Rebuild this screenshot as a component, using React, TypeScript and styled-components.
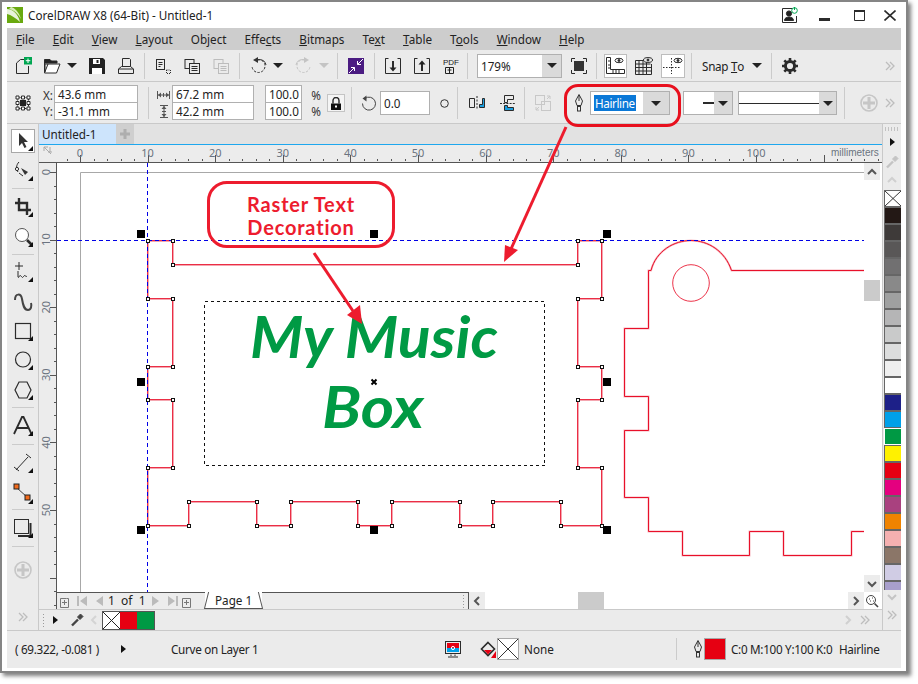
import React from "react";
import styled, { createGlobalStyle } from "styled-components";

const FS = "11.7px";
const GlobalStyle = createGlobalStyle`
  html, body { margin: 0; padding: 0; background: #fff; }
  body { font-family: "Noto Sans", "Open Sans", sans-serif; font-size: ${FS}; color: #222; }
`;

const RED = "#ed1c2e";
const Page = styled.div`
  position: relative;
  width: 918px;
  height: 684px;
  overflow: hidden;
`;
const Frame = styled.div`
  width: 908px;
  height: 673px;
  box-sizing: border-box;
  border: 2px solid #858585;
  padding: 0 5px 3px;
  background: #fff;
  box-shadow: 3px 3px 4px rgba(0, 0, 0, 0.5);
  display: flex;
  flex-direction: column;
`;
const TitleBar = styled.div`
  height: 26px;
  display: flex;
  align-items: center;
  flex: none;
`;
const TitleText = styled.span`
  margin-left: 5px;
  flex: 1;
`;
const WinBtn = styled.div<{ $ml: number }>`
  margin-left: ${(p) => p.$ml}px;
  display: flex;
`;
const MenuBar = styled.div`
  height: 22px;
  flex: none;
  background: #cdcdcd;
  display: flex;
  align-items: center;
  padding-left: 9px;
  gap: 18.1px;
`;
const MenuItem = styled.span`
  color: #222;
`;
const Toolbar = styled.div<{ $h: number; $pt?: number }>`
  height: ${(p) => p.$h}px;
  flex: none;
  box-sizing: border-box;
  background: #ebebeb;
  border-bottom: 1px solid #c9c9c9;
  padding-top: ${(p) => p.$pt ?? 0}px;
  display: flex;
  align-items: center;
`;
const Tool = styled.div<{ $ml?: number; $w?: number }>`
  margin-left: ${(p) => p.$ml ?? 0}px;
  width: ${(p) => (p.$w ? `${p.$w}px` : "auto")};
  display: flex;
  align-items: center;
  justify-content: center;
  flex: none;
  white-space: nowrap;
`;
const Toggle = styled(Tool)`
  height: 24px;
  box-sizing: border-box;
  background: #fff;
  border: 1px solid #bdbdbd;
`;
const SnapLabel = styled(Tool)`
  letter-spacing: -0.3px;
`;
const Sep = styled.div<{ $ml: number; $h?: number }>`
  margin-left: ${(p) => p.$ml}px;
  width: 1px;
  height: ${(p) => p.$h ?? 26}px;
  background: #cbcbcb;
  flex: none;
`;
const Combo = styled.div<{ $ml: number; $w: number; $h?: number }>`
  margin-left: ${(p) => p.$ml}px;
  width: ${(p) => p.$w}px;
  height: ${(p) => p.$h ?? 24}px;
  box-sizing: border-box;
  flex: none;
  display: flex;
  background: #fff;
  border: 1px solid #b0b0b0;
`;
const ComboValue = styled.div<{ $justify?: string; $flush?: boolean }>`
  flex: 1;
  min-width: 0;
  display: flex;
  align-items: center;
  justify-content: ${(p) => p.$justify ?? "flex-start"};
  padding-left: ${(p) => (p.$flush ? 0 : 3)}px;
`;
const ComboBtn = styled.div<{ $w: number }>`
  width: ${(p) => p.$w}px;
  background: #dadada;
  display: flex;
  align-items: center;
  justify-content: center;
`;
const Caret = styled.i<{ $dim?: boolean }>`
  display: block;
  width: 0;
  height: 0;
  border-left: 5px solid transparent;
  border-right: 5px solid transparent;
  border-top: 5px solid ${(p) => (p.$dim ? "#c4c4c4" : "#222")};
`;
const RightCaret = styled.i`
  display: block;
  width: 0;
  height: 0;
  border-top: 4px solid transparent;
  border-bottom: 4px solid transparent;
  border-left: 5px solid #111;
`;
const Selected = styled.span`
  background: #0a78d7;
  color: #fff;
  padding: 0 1px;
  letter-spacing: -0.4px;
`;
const Stack = styled.div<{ $ml: number; $w: number }>`
  margin-left: ${(p) => p.$ml}px;
  width: ${(p) => p.$w}px;
  flex: none;
  display: flex;
  flex-direction: column;
`;
const StackInput = styled.div`
  height: 16px;
  border: 1px solid #b0b0b0;
  margin-top: -1px;
  background: #fff;
  padding-left: 3px;
  line-height: 16px;
`;
const StackLabel = styled.div`
  height: 16px;
  line-height: 16px;
  text-align: center;
  color: #333;
`;
const DimSlot = styled(Tool)`
  height: 16px;
`;
const LockBtn = styled(Tool)`
  height: 18px;
  box-sizing: border-box;
  border: 1px solid #c4c4c4;
  background: #f4f4f4;
`;
const Workspace = styled.div`
  flex: 1;
  min-height: 0;
  display: grid;
  grid-template-columns: 32px 843px 19px;
`;
const Toolbox = styled.div`
  background: #ebebeb;
  border-right: 1px solid #c9c9c9;
  display: flex;
  flex-direction: column;
  align-items: center;
  padding-top: 5px;
`;
const BoxTool = styled.div<{ $h: number; $active?: boolean; $up?: number }>`
  width: 24px;
  height: ${(p) => p.$h}px;
  flex: none;
  box-sizing: border-box;
  display: flex;
  align-items: center;
  justify-content: center;
  padding-bottom: ${(p) => (p.$up ?? 0) * 2}px;
  background: ${(p) => (p.$active ? "#fff" : "transparent")};
  border: ${(p) => (p.$active ? "1px solid #a8a8a8" : "none")};
`;
const BoxSep = styled.div`
  width: 22px;
  height: 1px;
  background: #cbcbcb;
  flex: none;
`;
const Main = styled.div`
  display: grid;
  grid-template-rows: 21px 18px 446px 21px;
  min-width: 0;
`;
const DocTabs = styled.div`
  background: #e2e2e2;
  border-bottom: 1px solid #1ea7ee;
  display: flex;
`;
const DocTab = styled.div`
  width: 77px;
  background: #cde4fc;
  padding-left: 3px;
  box-sizing: border-box;
  line-height: 20px;
`;
const AddTab = styled.div`
  width: 18px;
  background: #cfcfcf;
  display: flex;
  align-items: center;
  justify-content: center;
`;
const TopRuler = styled.div`
  background: #ececec;
  border-bottom: 1px solid #555;
  display: flex;
`;
const RulerText = styled.text`
  font-family: "Noto Sans", "Open Sans", sans-serif;
  font-size: 11px;
  fill: #6b7480;
`;
const RulerUnit = styled.text`
  font-family: "Liberation Sans", sans-serif;
  font-size: 10px;
  fill: #6b7480;
`;
const Stage = styled.div`
  display: flex;
  min-height: 0;
`;
const LeftRuler = styled.div`
  width: 17px;
  background: #ececec;
  flex: none;
`;
const CanvasCol = styled.div`
  width: 808px;
  box-sizing: border-box;
  border-left: 1px solid #555;
  display: flex;
  flex-direction: column;
  flex: none;
`;
const Canvas = styled.div`
  height: 429px;
  background: #fff;
  flex: none;
`;
const PageNav = styled.div`
  height: 17px;
  display: flex;
  flex: none;
`;
const NavGray = styled.div<{ $w: number }>`
  width: ${(p) => p.$w}px;
  box-sizing: border-box;
  flex: none;
  background: #ececec;
  border-top: 1px solid #555;
  display: flex;
  align-items: center;
`;
const NavEnd = styled(NavGray)`
  border-right: 1px solid #555;
  justify-content: flex-end;
  padding-right: 3px;
`;
const PageTab = styled.div`
  width: 57px;
  box-sizing: border-box;
  flex: none;
  position: relative;
  background: #fff;
  border-bottom: 1px solid #555;
  line-height: 16px;
  padding-left: 10px;
  &::before,
  &::after {
    content: "";
    position: absolute;
    top: 0;
    bottom: -1px;
    width: 1px;
    background: #555;
  }
  &::before {
    left: 1px;
    transform: skewX(-14deg);
  }
  &::after {
    right: 1px;
    transform: skewX(14deg);
  }
`;
const HScroll = styled.div`
  flex: 1;
  display: flex;
  background: #fff;
`;
const ScrollBtn = styled.div`
  width: 16px;
  background: #ececec;
  display: flex;
  align-items: center;
  justify-content: center;
  flex: none;
`;
const HThumb = styled.div`
  width: 26px;
  margin-left: 93px;
  background: #cbcbcb;
`;
const HSpacer = styled.div`
  flex: 1;
`;
const VScroll = styled.div`
  width: 18px;
  background: #fff;
  display: flex;
  flex-direction: column;
  align-items: flex-start;
  flex: none;
`;
const VBtn = styled.div`
  width: 16px;
  height: 17px;
  background: #ececec;
  display: flex;
  align-items: center;
  justify-content: center;
  flex: none;
`;
const VThumb = styled.div`
  width: 16px;
  height: 21px;
  margin-top: 100px;
  background: #cbcbcb;
  flex: none;
`;
const VSpacer = styled.div`
  flex: 1;
`;
const VCorner = styled.div`
  width: 16px;
  height: 17px;
  display: flex;
  align-items: center;
  justify-content: center;
  flex: none;
`;
const ColorRow = styled.div`
  background: #ebebeb;
  border-top: 1px solid #c9c9c9;
  display: flex;
  align-items: center;
`;
const Dots = styled.div`
  width: 3px;
  height: 14px;
  margin-left: 3px;
  background-image: radial-gradient(#9a9a9a 0.7px, transparent 0.8px);
  background-size: 3px 3px;
  flex: none;
`;
const Chip = styled.div<{ $c: string }>`
  width: 17px;
  height: 17px;
  background: ${(p) => p.$c};
  flex: none;
  display: flex;
`;
const ChipGroup = styled.div`
  margin-left: 3px;
  display: flex;
  border: 1px solid #555;
  flex: none;
`;
const Palette = styled.div`
  background: #ebebeb;
  border-left: 1px solid #c9c9c9;
  display: flex;
  flex-direction: column;
  align-items: center;
  overflow: hidden;
`;
const PaletteHandle = styled.div`
  width: 16px;
  height: 4px;
  margin-top: 3px;
  background-image: radial-gradient(#9a9a9a 0.7px, transparent 0.8px);
  background-size: 3px 2px;
  flex: none;
`;
const PaletteTool = styled.div<{ $h: number }>`
  height: ${(p) => p.$h}px;
  width: 100%;
  display: flex;
  align-items: center;
  justify-content: center;
  flex: none;
`;
const Swatches = styled.div`
  height: 400px;
  width: 18px;
  margin-left: 1px;
  flex: none;
  overflow: hidden;
  display: flex;
  flex-direction: column;
`;
const Swatch = styled.div<{ $c: string; $light?: boolean }>`
  height: 17px;
  flex: none;
  box-sizing: border-box;
  background: ${(p) => p.$c};
  border: 1px solid ${(p) => (p.$light ? "#fff" : "#666")};
  display: flex;
`;
const StatusBar = styled.div`
  height: 38px;
  flex: none;
  box-sizing: border-box;
  background: #ebebeb;
  border-top: 1px solid #c9c9c9;
  display: flex;
  align-items: center;
  padding-bottom: 1px;
`;
const StatusText = styled.span<{ $ml: number; $w?: number; $tight?: boolean }>`
  margin-left: ${(p) => p.$ml}px;
  width: ${(p) => (p.$w ? `${p.$w}px` : "auto")};
  letter-spacing: ${(p) => (p.$tight ? "-0.3px" : "0")};
  flex: none;
  white-space: nowrap;
  color: #222;
`;
const StatusBox = styled.div<{ $c: string; $w: number; $ml: number }>`
  margin-left: ${(p) => p.$ml}px;
  width: ${(p) => p.$w}px;
  height: 22px;
  box-sizing: border-box;
  border: 1px solid #a8a8a8;
  background: ${(p) => p.$c};
  flex: none;
  display: flex;
`;
const Overlay = styled.svg`
  position: absolute;
  left: 0;
  top: 0;
  pointer-events: none;
`;
const PenCallout = styled.div`
  position: absolute;
  left: 564px;
  top: 84px;
  width: 117px;
  height: 43px;
  box-sizing: border-box;
  border: 3px solid #e8101e;
  border-radius: 14px;
`;
const NoteCallout = styled.div`
  position: absolute;
  left: 207px;
  top: 181px;
  width: 188px;
  height: 67px;
  box-sizing: border-box;
  border: 3px solid ${RED};
  border-radius: 20px;
  color: ${RED};
  font-family: "Lato", "Open Sans", sans-serif;
  font-weight: 700;
  font-size: 20px;
  line-height: 23px;
  letter-spacing: 0.8px;
  text-align: center;
  padding-top: 9px;
`;
const ArtText = styled.text`
  font-family: "Lato", "Open Sans", sans-serif;
  font-weight: 700;
  font-style: italic;
  fill: #009a44;
`;

type IcoProps = { s?: number; w?: number; h?: number; c?: string; children: React.ReactNode };
const Ico = ({ s = 16, w, h, c = "#2b2b2b", children }: IcoProps) => (
  <svg width={w ?? s} height={h ?? s} viewBox={`0 0 ${w ?? s} ${h ?? s}`} fill="none" stroke={c} strokeWidth={1}>
    {children}
  </svg>
);

const Chevrons = ({ c = "#bdbdbd" }: { c?: string }) => (
  <Ico w={10} h={10} c={c}>
    <path d="M1 1l4 4-4 4M5 1l4 4-4 4" strokeWidth={1.3} />
  </Ico>
);
const ChevUp = ({ c = "#555", dir = "up" }: { c?: string; dir?: "up" | "down" | "left" | "right" }) => {
  const d = { up: "M1 7l4-4 4 4", down: "M1 3l4 4 4-4", left: "M7 1L3 5l4 4", right: "M3 1l4 4-4 4" }[dir];
  return (
    <Ico w={10} h={10} c={c}>
      <path d={d} strokeWidth={2} />
    </Ico>
  );
};
const NoneMark = ({ s }: { s: number }) => (
  <svg width="100%" height="100%" viewBox={`0 0 ${s} ${s}`} preserveAspectRatio="none" style={{ background: "#fff" }}>
    <path d={`M0 0L${s} ${s}M${s} 0L0 ${s}`} stroke="#222" strokeWidth={1} fill="none" />
  </svg>
);
const PenIcon = ({ c = "#333" }: { c?: string }) => (
  <Ico w={10} h={18} c={c}>
    <path d="M5 .5L8.5 7 7 11.5H3L1.5 7z" />
    <path d="M5 1v6" />
    <rect x="3.5" y="12.5" width="3" height="4.5" />
  </Ico>
);
const Magnifier = () => (
  <Ico s={14} c="#444">
    <circle cx="6" cy="6" r="4.5" />
    <path d="M9.5 9.5l3.5 3.5" strokeWidth={1.6} />
    <path d="M4 5h1M7 4h1M5 7h1M8 7h1" />
  </Ico>
);
const Eyedropper = ({ c = "#444" }: { c?: string }) => (
  <Ico s={14} c={c}>
    <path d="M2 12.5L8 6.5" strokeWidth={2.4} />
    <path d="M7.5 4l3-3 2.5 2.5-3 3z" fill={c} />
  </Ico>
);

const Icons = {
  New: () => (
    <Ico s={18}>
      <path d="M1.5 16.5V6L5.5 2.5H10M13.5 9v7.5h-12" />
      <rect x="9" y="0" width="8" height="7.5" fill="#00a651" stroke="none" />
      <path d="M13 1.5v4.5M10.8 3.7h4.5" stroke="#fff" />
    </Ico>
  ),
  Open: () => (
    <Ico w={17} h={16}>
      <path d="M.5 15V1.5H6L7.5 3H13v2H.5" fill="#222" />
      <path d="M.5 15h12L16 6H4L.5 15z" fill="#fff" />
      <path d="M1 14V6h3" />
    </Ico>
  ),
  Save: () => (
    <Ico s={16}>
      <path d="M0 0h14l2 2v14H0z" fill="#222" stroke="none" />
      <rect x="4" y="1" width="7" height="5" fill="#fff" stroke="none" />
      <rect x="7.5" y="2" width="2" height="3" fill="#222" stroke="none" />
      <rect x="3" y="10" width="10" height="6" fill="#fff" stroke="none" />
    </Ico>
  ),
  Print: () => (
    <Ico s={16}>
      <path d="M4.5 8.5v-8h7l1 1v7" />
      <path d="M3.5 8.5h9M.5 11l3-2.5M15.5 11l-3-2.5M.5 11v4.5h15V11z" />
    </Ico>
  ),
  Importish: () => (
    <Ico w={17} h={16}>
      <rect x="1.5" y="1.5" width="8" height="10" />
      <path d="M3.5 4.5h4M3.5 6.5h4M3.5 8.5h2" />
      <rect x="11.5" y="12" width="4" height="3.5" strokeDasharray="1 1" />
    </Ico>
  ),
  Copy: ({ c = "#2b2b2b" }: { c?: string }) => (
    <Ico s={16} c={c}>
      <rect x="1" y="1.5" width="9" height="9" fill="#ebebeb" />
      <rect x="5.5" y="5.5" width="10" height="10" fill="#ebebeb" />
      <path d="M7.5 8.5h6M7.5 10.5h6M7.5 12.5h6" />
    </Ico>
  ),
  Undo: ({ c = "#333", flip }: { c?: string; flip?: boolean }) => (
    <svg width="17" height="17" viewBox="0 0 17 17" fill="none" stroke={c} style={flip ? { transform: "scaleX(-1)" } : undefined}>
      <path d="M6 3a6.5 6.5 0 1 1-4 6" strokeDasharray="2.5 1.4" strokeDashoffset="2" />
      <path d="M8 0v6L3 3z" fill={c} stroke="none" />
      <path d="M16 8a6 6 0 0 0-8-5" />
    </svg>
  ),
  Purple: () => (
    <Ico s={16}>
      <rect width="16" height="16" fill="#4b1c82" stroke="none" />
      <path d="M15 1L9.5 6.5M1 15l5.5-5.5" stroke="#fff" />
      <path d="M9.5 3v3.5H13M6.5 13V9.5H3" stroke="#fff" />
    </Ico>
  ),
  BoxArrow: ({ up }: { up?: boolean }) => (
    <Ico s={16}>
      <path d="M.5 3V.5h3M12.5.5h3V15.5H.5V.5" />
      <path d={up ? "M8 13V5" : "M8 3v8"} strokeWidth={2} />
      <path d={up ? "M4.5 6.5L8 2.5l3.5 4z" : "M4.5 9.5L8 13.5l3.5-4z"} fill="#222" stroke="none" />
    </Ico>
  ),
  Fit: () => (
    <Ico s={16}>
      <rect x="3" y="3" width="10" height="10" fill="#333" stroke="none" />
      <path d="M.5 4V.5H4M12 .5h3.5V4M.5 12v3.5H4M12 15.5h3.5V12" />
    </Ico>
  ),
  RulerToggle: () => (
    <Ico w={19} h={18}>
      <path d="M.5 .5h4v12h14v4H.5z" />
      <path d="M2 4h2M2 8h2M2 11h2M7 13v3M10 13v3M13 13v3" />
      <ellipse cx="13" cy="3.5" rx="4" ry="2.2" />
      <circle cx="13" cy="3.5" r="1" fill="#222" />
    </Ico>
  ),
  Grid: () => (
    <Ico w={18} h={18}>
      <path d="M.5 3.5h11v14H.5zM.5 7h15M.5 10.5h16M.5 14h16M4 3.5v14M8 3.5v14M11.5 7.5v10h5V7" />
      <ellipse cx="13" cy="3" rx="4.5" ry="2.4" fill="#ebebeb" />
      <circle cx="13" cy="3" r="1" fill="#222" />
    </Ico>
  ),
  Guides: () => (
    <Ico w={20} h={18}>
      <path d="M8.5 1v16M0 10.5h17" strokeDasharray="1.5 1.5" />
      <ellipse cx="15" cy="3.5" rx="4" ry="2.2" />
      <circle cx="15" cy="3.5" r="1" fill="#222" />
    </Ico>
  ),
  Gear: () => (
    <Ico s={16}>
      <circle cx="8" cy="8" r="4.6" strokeWidth={3} />
      <path d="M8 0v3M8 13v3M0 8h3M13 8h3M2.3 2.3l2.2 2.2M11.5 11.5l2.2 2.2M13.7 2.3l-2.2 2.2M4.5 11.5l-2.2 2.2" strokeWidth={2.6} />
    </Ico>
  ),
  Origin: () => (
    <Ico s={16}>
      <path d="M2.5 2.5h11v11h-11z" strokeDasharray="2 1" />
      <rect x="5" y="5" width="6" height="6" fill="#222" stroke="none" />
      <path d="M1 1h3v3H1zM6.5 1h3v3h-3zM12 1h3v3h-3zM1 6.5h3v3H1zM12 6.5h3v3h-3zM1 12h3v3H1zM6.5 12h3v3h-3zM12 12h3v3h-3z" fill="#fff" />
    </Ico>
  ),
  WidthDim: () => (
    <Ico w={13} h={8} c="#555">
      <path d="M.5 0v8M12.5 0v8M1 4h11" />
      <path d="M1 4l3-2.5v5zM12 4l-3-2.5v5z" fill="#555" stroke="none" />
      <path d="M6.5 2v4" />
    </Ico>
  ),
  HeightDim: () => (
    <Ico w={8} h={13} c="#555">
      <path d="M0 .5h8M0 12.5h8M4 1v11" />
      <path d="M4 1L1.5 4h5zM4 12l-2.5-3h5z" fill="#555" stroke="none" />
      <path d="M2 6.5h4" />
    </Ico>
  ),
  Lock: () => (
    <Ico w={12} h={13}>
      <path d="M3 6.5V3.5a3 3 0 0 1 6 0v3" strokeWidth={1.4} />
      <rect x="1" y="6.5" width="10" height="6.5" fill="#111" stroke="none" />
      <rect x="5" y="8.5" width="2" height="2" fill="#fff" stroke="none" />
    </Ico>
  ),
  Rotate: () => (
    <Ico s={16} c="#444">
      <path d="M4 3.5A6.5 6.5 0 1 1 1.5 8.5" />
      <path d="M5.5 .5v6L1.5 3.5z" fill="#444" stroke="none" />
    </Ico>
  ),
  Mirror: () => (
    <Ico w={16} h={14}>
      <path d="M.5 2.5h5v9h-5z" />
      <path d="M8 0v14" strokeDasharray="2 1.5" />
      <path d="M10.5 11.5h5v-9h-2v6h-3z" fill="#1c9fe0" />
    </Ico>
  ),
  Align: () => (
    <Ico w={16} h={16}>
      <path d="M4.5 .5h9v4h-6v3h-3z" />
      <path d="M0 8.5h16" strokeDasharray="2 1.2" />
      <path d="M4.5 10.5h3v2h6v3h-9z" fill="#1c9fe0" />
    </Ico>
  ),
  Disabled: () => (
    <Ico s={16} c="#c8c8c8">
      <rect x=".5" y=".5" width="9" height="9" />
      <rect x="6.5" y="6.5" width="9" height="9" />
      <path d="M12 1h3v3M15 1l-3 3M1 12v3h3M1 15l3-3" />
    </Ico>
  ),
  Plus: ({ s = 18 }: { s?: number }) => (
    <svg width={s} height={s} viewBox="0 0 18 18" fill="none" stroke="#c6c6c6">
      <circle cx="9" cy="9" r="8" strokeWidth={1.6} />
      <path d="M9 3v12M3 9h12" strokeWidth={3} />
    </svg>
  ),
  Profile: () => (
    <Ico s={16}>
      <path d="M.5 1.5h10M.5 1.5v14h14V9" />
      <circle cx="7" cy="6.5" r="2.6" fill="#222" />
      <path d="M2.5 13.5c0-3 3-3.5 4.5-3.5s4.5.5 4.5 3.5z" fill="#222" />
      <circle cx="12.5" cy="3.5" r="2.8" stroke="#00a651" />
      <path d="M12.5 0v3" stroke="#00a651" />
    </Ico>
  ),
  Logo: () => (
    <svg width="16" height="16" viewBox="0 0 16 16">
      <rect width="16" height="16" fill="#69a90f" />
      <path d="M0 2C5 2 11 6 13 15 9 11 4 8 0 7z" fill="#fff" opacity=".85" />
      <path d="M4 0c4 1 8 5 10 12C11 7 7 3 2 2z" fill="#d8ecb8" />
    </svg>
  ),
};

const ToolGlyph = ({ children }: { children: React.ReactNode }) => (
  <Ico w={22} h={22}>
    {children}
    <path d="M21 16v5h-5z" fill="#111" stroke="none" />
  </Ico>
);

const BoxIcons = {
  Pick: () => (
    <ToolGlyph>
      <path d="M7 3v13l3-3 2.5 5 2-1-2.5-5h4z" fill="#333" stroke="none" />
    </ToolGlyph>
  ),
  Shape: () => (
    <ToolGlyph>
      <path d="M7 2C4 5 4 9 6 12" />
      <circle cx="5" cy="9" r="1.6" fill="#fff" />
      <path d="M9 8l7 4-3 3z" fill="#333" stroke="none" />
      <path d="M7 13l4 3" />
    </ToolGlyph>
  ),
  Crop: () => (
    <ToolGlyph>
      <path d="M7 2v12h12M3 7h12v12" strokeWidth={2.4} />
    </ToolGlyph>
  ),
  Zoom: () => (
    <ToolGlyph>
      <circle cx="10" cy="9" r="6.5" fill="#fff" stroke="#555" />
      <path d="M15 14l5 5" strokeWidth={2.6} />
    </ToolGlyph>
  ),
  Free: () => (
    <ToolGlyph>
      <path d="M7 1v8M3 5h8" />
      <path d="M6 10v6c1 2 1-3 3-1s1 2 3 0 1 2 3 0" />
    </ToolGlyph>
  ),
  Curve: () => (
    <Ico s={22} c="#444">
      <path d="M3 9C3 2 9 2 10 8c1 6 2 11 6 11 3 0 4-4 3-7" strokeWidth={2} />
    </Ico>
  ),
  Rect: () => (
    <ToolGlyph>
      <rect x="3.5" y="3.5" width="15" height="15" strokeWidth={1.2} />
    </ToolGlyph>
  ),
  Ellipse: () => (
    <ToolGlyph>
      <circle cx="11" cy="10.5" r="7.5" strokeWidth={1.2} />
    </ToolGlyph>
  ),
  Polygon: () => (
    <ToolGlyph>
      <path d="M7 3h8l4 8-4 8H7l-4-8z" strokeWidth={1.2} />
    </ToolGlyph>
  ),
  Text: () => (
    <ToolGlyph>
      <path d="M2 19L10 2h1.5l8 17M5 13h12" strokeWidth={1.8} />
    </ToolGlyph>
  ),
  Line: () => (
    <ToolGlyph>
      <path d="M4 18L16 5" />
      <path d="M2 15l5 4M14 2l5 4" />
    </ToolGlyph>
  ),
  Connector: () => (
    <ToolGlyph>
      <path d="M5 5L15 14" stroke="#444" />
      <rect x="2" y="1" width="5" height="5" fill="#f26a1b" stroke="#222" />
      <rect x="13" y="12" width="5" height="5" fill="#f26a1b" stroke="#222" />
    </ToolGlyph>
  ),
  Shadow: () => (
    <ToolGlyph>
      <rect x="2.5" y="2.5" width="14" height="14" />
      <path d="M18.5 6v13H6" strokeWidth={2} />
    </ToolGlyph>
  ),
};

const MENU: [string, string, string][] = [
  ["", "F", "ile"], ["", "E", "dit"], ["", "V", "iew"], ["", "L", "ayout"], ["Ob", "j", "ect"],
  ["Effe", "c", "ts"], ["", "B", "itmaps"], ["Te", "x", "t"], ["", "T", "able"], ["T", "o", "ols"],
  ["", "W", "indow"], ["", "H", "elp"],
];

const PALETTE = [
  "#231815", "#3e3a39", "#595757", "#717071", "#898989", "#9fa0a0", "#b5b5b6", "#c9caca",
  "#dcdddd", "#efefef", "#ffffff", "#1d2088", "#00a0e9", "#009944", "#fff100", "#e60012",
  "#e4007f", "#a9417f", "#f08300", "#f4b0b0", "#8b7668", "#d0cce4", "#a89fcc",
];

const LEFT_PIECE: [number, number][] = [
  [147, 240], [172, 240], [172, 264], [577, 264], [577, 240], [601, 240], [601, 298], [577, 298],
  [577, 366], [601, 366], [601, 399], [577, 399], [577, 467], [601, 467], [601, 525], [560, 525],
  [560, 501], [492, 501], [492, 525], [459, 525], [459, 501], [391, 501], [391, 525], [357, 525],
  [357, 501], [290, 501], [290, 525], [256, 525], [256, 501], [188, 501], [188, 525], [147, 525],
  [147, 467], [172, 467], [172, 399], [147, 399], [147, 366], [172, 366], [172, 298], [147, 298],
];
const leftPath = "M" + LEFT_PIECE.map(([x, y]) => `${x + 0.5} ${y + 0.5}`).join("L") + "Z";
const rightPath =
  "M864 270.5H731.5C725 251 708 240.5 691 240.5S656 251 651 270.5H648.5V328.5H624.5V396.5H648.5V430.5H624.5V497.5H648.5V531.5H682.5V555.5H749.5V531.5H783.5V555.5H851.5V531.5H864";
const HANDLES: [number, number][] = [
  [141, 234], [374, 234], [607, 234], [141, 382], [607, 382], [141, 530], [374, 530], [607, 530],
];
const TOP_LABELS = [0, 10, 20, 30, 40, 50, 60, 70, 80, 90, 100];
const MAJOR = 67.6;

const TopRulerArt = () => (
  <svg width="843" height="17" viewBox="39 145 843 17">
    {Array.from({ length: 62 }, (_, i) => (
      <rect key={i} x={Math.round(66.5 + i * 13.52)} y={i % 5 === 1 ? 155 : 159} width="1" height={i % 5 === 1 ? 7 : 2} fill="#555" />
    ))}
    {TOP_LABELS.map((n, i) => (
      <RulerText key={n} x={80 + i * MAJOR} y={157} textAnchor="middle">{n}</RulerText>
    ))}
    <RulerUnit x={831} y={156}>millimeters</RulerUnit>
    <path d="M44 147l7 7M44 151v-4h4M48 152h4M50 147v5" stroke="#aaa" fill="none" />
  </svg>
);

const LeftRulerArt = () => (
  <svg width="17" height="446" viewBox="39 163 17 446">
    {Array.from({ length: 34 }, (_, i) => (
      <rect key={i} x={i % 5 === 0 ? 50 : 54} y={Math.round(172 + i * 13.52)} width={i % 5 === 0 ? 6 : 2} height="1" fill="#555" />
    ))}
    {[0, 10, 20, 30, 40, 50].map((n, i) => (
      <RulerText key={n} transform={`translate(50 ${172 + i * MAJOR}) rotate(-90)`} textAnchor="middle">{n}</RulerText>
    ))}
  </svg>
);

const Drawing = () => (
  <svg width="807" height="429" viewBox="57 163 807 429" style={{ display: "block" }}>
    <path d="M864 172.5H80.5V592" stroke="#a8a8a8" fill="none" />
    <g fill="none" shapeRendering="crispEdges">
      <path d={leftPath} stroke="#f4a6b0" strokeWidth={2} />
      <path d={leftPath} stroke="#e8102a" strokeWidth={1} opacity={0.8} />
    </g>
    <path d={rightPath} stroke="#f7b6be" strokeWidth={2} fill="none" />
    <path d={rightPath} stroke="#e8102a" strokeWidth={1} fill="none" />
    <circle cx="691" cy="283" r="18.3" fill="none" stroke="#e8102a" opacity={0.85} />
    <path d="M57 240.5H864" stroke="#0000e6" strokeDasharray="4 3" shapeRendering="crispEdges" />
    <path d="M147.5 163V592" stroke="#0000e6" strokeDasharray="4 3" shapeRendering="crispEdges" />
    <rect x="204.5" y="301.5" width="340" height="164" fill="none" stroke="#111" strokeDasharray="3 3" shapeRendering="crispEdges" />
    {LEFT_PIECE.map(([x, y], i) => (
      <rect key={i} x={x - 1} y={y - 1} width="3" height="3" fill="#fff" stroke="#111" shapeRendering="crispEdges" />
    ))}
    {HANDLES.map(([x, y], i) => (
      <rect key={i} x={x - 4} y={y - 4} width="8" height="8" fill="#000" />
    ))}
    <ArtText x="250" y="358" fontSize="58" textLength="248" lengthAdjust="spacingAndGlyphs">My Music</ArtText>
    <ArtText x="322" y="428" fontSize="58" textLength="102" lengthAdjust="spacingAndGlyphs">Box</ArtText>
    <path d="M371.5 379.5l5 5M376.5 379.5l-5 5" stroke="#000" strokeWidth={2} />
  </svg>
);

export default function App() {
  return (
    <Page>
      <GlobalStyle />
      <Frame>
        <TitleBar>
          <Icons.Logo />
          <TitleText>CorelDRAW X8 (64-Bit) - Untitled-1</TitleText>
          <WinBtn $ml={0}><Icons.Profile /></WinBtn>
          <WinBtn $ml={21}>
            <Ico w={11} h={12}><path d="M0 10.5h11" strokeWidth={3} /></Ico>
          </WinBtn>
          <WinBtn $ml={24}>
            <Ico w={11} h={11}><path d="M.5 1.5h10v9H.5z" /><path d="M0 1h11" strokeWidth={2} /></Ico>
          </WinBtn>
          <WinBtn $ml={19}>
            <Ico w={12} h={11}><path d="M.5 .5l11 10M11.5 .5l-11 10" strokeWidth={1.6} /></Ico>
          </WinBtn>
          <WinBtn $ml={5}><span /></WinBtn>
        </TitleBar>

        <MenuBar>
          {MENU.map(([a, u, b]) => (
            <MenuItem key={a + u + b}>{a}<u>{u}</u>{b}</MenuItem>
          ))}
        </MenuBar>

        <Toolbar $h={32}>
          <Tool $ml={8}><Icons.New /></Tool>
          <Tool $ml={11}><Icons.Open /></Tool>
          <Tool $ml={6}><Caret /></Tool>
          <Tool $ml={12}><Icons.Save /></Tool>
          <Tool $ml={13}><Icons.Print /></Tool>
          <Sep $ml={10} />
          <Tool $ml={10}><Icons.Importish /></Tool>
          <Tool $ml={12}><Icons.Copy /></Tool>
          <Tool $ml={13}><Icons.Copy c="#bcbcbc" /></Tool>
          <Sep $ml={10} />
          <Tool $ml={10}><Icons.Undo /></Tool>
          <Tool $ml={6}><Caret /></Tool>
          <Tool $ml={12}><Icons.Undo flip c="#c4c4c4" /></Tool>
          <Tool $ml={7}><Caret $dim /></Tool>
          <Sep $ml={8} />
          <Tool $ml={10}><Icons.Purple /></Tool>
          <Sep $ml={10} />
          <Tool $ml={10}><Icons.BoxArrow /></Tool>
          <Tool $ml={13}><Icons.BoxArrow up /></Tool>
          <Tool $ml={13} $w={17}>
            <svg width="17" height="17" viewBox="0 0 17 17">
              <text x="0" y="8" fontSize="8" fontFamily="'Liberation Sans', sans-serif" fill="#222">PDF</text>
              <path d="M2.5 10.5h8v6h-8zM6.5 10v6M4.5 13h4" stroke="#222" fill="none" />
            </svg>
          </Tool>
          <Sep $ml={7} />
          <Combo $ml={9} $w={85}>
            <ComboValue>179%</ComboValue>
            <ComboBtn $w={19}><Caret /></ComboBtn>
          </Combo>
          <Tool $ml={9}><Icons.Fit /></Tool>
          <Sep $ml={9} />
          <Toggle $ml={7} $w={23}><Icons.RulerToggle /></Toggle>
          <Tool $ml={8}><Icons.Grid /></Tool>
          <Toggle $ml={8} $w={24}><Icons.Guides /></Toggle>
          <Sep $ml={6} />
          <SnapLabel $ml={10} $w={42}>Snap&nbsp;<u>T</u>o</SnapLabel>
          <Tool $ml={8}><Caret /></Tool>
          <Sep $ml={9} />
          <Tool $ml={10}><Icons.Gear /></Tool>
          <Tool $ml={87}><Chevrons /></Tool>
        </Toolbar>

        <Toolbar $h={42} $pt={1}>
          <Tool $ml={8}><Icons.Origin /></Tool>
          <Stack $ml={11} $w={12}>
            <StackLabel>X:</StackLabel>
            <StackLabel>Y:</StackLabel>
          </Stack>
          <Stack $ml={0} $w={84}>
            <StackInput>43.6 mm</StackInput>
            <StackInput>-31.1 mm</StackInput>
          </Stack>
          <Sep $ml={10} $h={32} />
          <Stack $ml={8} $w={13}>
            <DimSlot><Icons.WidthDim /></DimSlot>
            <DimSlot><Icons.HeightDim /></DimSlot>
          </Stack>
          <Stack $ml={2} $w={82}>
            <StackInput>67.2 mm</StackInput>
            <StackInput>42.2 mm</StackInput>
          </Stack>
          <Stack $ml={11} $w={37}>
            <StackInput>100.0</StackInput>
            <StackInput>100.0</StackInput>
          </Stack>
          <Stack $ml={9} $w={10}>
            <StackLabel>%</StackLabel>
            <StackLabel>%</StackLabel>
          </Stack>
          <LockBtn $ml={6} $w={18}><Icons.Lock /></LockBtn>
          <Sep $ml={6} $h={32} />
          <Tool $ml={9}><Icons.Rotate /></Tool>
          <Combo $ml={3} $w={50}><ComboValue>0.0</ComboValue></Combo>
          <Tool $ml={10}>
            <Ico w={9} h={9} c="#333"><circle cx="4.5" cy="4.5" r="3.8" /></Ico>
          </Tool>
          <Sep $ml={8} $h={32} />
          <Tool $ml={11}><Icons.Mirror /></Tool>
          <Tool $ml={15}><Icons.Align /></Tool>
          <Sep $ml={8} $h={32} />
          <Tool $ml={10}><Icons.Disabled /></Tool>
          <Tool $ml={23}><PenIcon /></Tool>
          <Combo $ml={6} $w={80}>
            <ComboValue><Selected>Hairline</Selected></ComboValue>
            <ComboBtn $w={26}><Caret /></ComboBtn>
          </Combo>
          <Combo $ml={13} $w={50}>
            <ComboValue $justify="flex-end"><Ico w={11} h={2}><path d="M0 1h11" strokeWidth={2} /></Ico></ComboValue>
            <ComboBtn $w={18}><Caret /></ComboBtn>
          </Combo>
          <Combo $ml={5} $w={99}>
            <ComboValue $flush><Ico w={80} h={1}><path d="M0 .5h80" /></Ico></ComboValue>
            <ComboBtn $w={17}><Caret /></ComboBtn>
          </Combo>
          <Sep $ml={7} $h={32} />
          <Tool $ml={15}><Icons.Plus /></Tool>
          <Tool $ml={7}><Chevrons /></Tool>
        </Toolbar>

        <Workspace>
          <Toolbox>
            <BoxTool $h={24} $active><BoxIcons.Pick /></BoxTool>
            <BoxTool $h={35}><BoxIcons.Shape /></BoxTool>
            <BoxSep />
            <BoxTool $h={36}><BoxIcons.Crop /></BoxTool>
            <BoxTool $h={29} $up={3}><BoxIcons.Zoom /></BoxTool>
            <BoxSep />
            <BoxTool $h={34}><BoxIcons.Free /></BoxTool>
            <BoxTool $h={30} $up={2}><BoxIcons.Curve /></BoxTool>
            <BoxTool $h={29} $up={3}><BoxIcons.Rect /></BoxTool>
            <BoxTool $h={30} $up={3}><BoxIcons.Ellipse /></BoxTool>
            <BoxTool $h={29} $up={3}><BoxIcons.Polygon /></BoxTool>
            <BoxSep />
            <BoxTool $h={36}><BoxIcons.Text /></BoxTool>
            <BoxSep />
            <BoxTool $h={36}><BoxIcons.Line /></BoxTool>
            <BoxTool $h={28} $up={1}><BoxIcons.Connector /></BoxTool>
            <BoxSep />
            <BoxTool $h={36}><BoxIcons.Shadow /></BoxTool>
            <BoxSep />
            <BoxTool $h={46}><Icons.Plus /></BoxTool>
            <BoxTool $h={48}><Chevrons /></BoxTool>
          </Toolbox>

          <Main>
            <DocTabs>
              <DocTab>Untitled-1</DocTab>
              <AddTab><Ico w={12} h={12} c="#aeaeae"><path d="M6 1v10M1 6h10" strokeWidth={3} /></Ico></AddTab>
            </DocTabs>
            <TopRuler><TopRulerArt /></TopRuler>
            <Stage>
              <LeftRuler><LeftRulerArt /></LeftRuler>
              <CanvasCol>
                <Canvas><Drawing /></Canvas>
                <PageNav>
                  <NavGray $w={148}>
                    <svg width="148" height="16" viewBox="57 593 148 16">
                      <g fill="none" stroke="#777">
                        <path d="M60.5 598.5h6l2 0v9h-8zM64.5 600v5M62 602.5h5" />
                        <path d="M182.5 598.5h8v9h-8zM186.5 600v5M184 602.5h5" />
                      </g>
                      <g fill="#bbb">
                        <path d="M77 596h2v10h-2zM87 596v10l-7-5zM103 596v10l-7-5zM152 596v10l7-5zM168 596v10l7-5zM176 596h2v10h-2z" />
                      </g>
                      <text x="108" y="605" fontSize="12" fontFamily="'Noto Sans', sans-serif" fill="#222" xmlSpace="preserve">1  of  1</text>
                    </svg>
                  </NavGray>
                  <PageTab>Page 1</PageTab>
                  <NavEnd $w={207}>
                    <Dots />
                  </NavEnd>
                  <HScroll>
                    <ScrollBtn><ChevUp dir="left" /></ScrollBtn>
                    <HThumb />
                    <HSpacer />
                    <ScrollBtn><ChevUp dir="right" /></ScrollBtn>
                  </HScroll>
                </PageNav>
              </CanvasCol>
              <VScroll>
                <VBtn><ChevUp /></VBtn>
                <VThumb />
                <VSpacer />
                <VBtn><ChevUp dir="down" /></VBtn>
                <VCorner><Magnifier /></VCorner>
              </VScroll>
            </Stage>
            <ColorRow>
              <Dots />
              <Tool $ml={8}><RightCaret /></Tool>
              <Tool $ml={12}><Eyedropper /></Tool>
              <Tool $ml={5}><ChevUp dir="left" c="#d4d4d4" /></Tool>
              <ChipGroup>
                <Chip $c="#fff"><NoneMark s={17} /></Chip>
                <Chip $c="#e60012" />
                <Chip $c="#009944" />
              </ChipGroup>
              <Tool $ml={688}><ChevUp dir="right" c="#d0d0d0" /></Tool>
              <Tool $ml={7}><Chevrons /></Tool>
            </ColorRow>
          </Main>

          <Palette>
            <PaletteHandle />
            <PaletteTool $h={22}><RightCaret /></PaletteTool>
            <PaletteTool $h={17}><Eyedropper c="#c4c4c4" /></PaletteTool>
            <PaletteTool $h={20}><ChevUp c="#d0d0d0" /></PaletteTool>
            <Swatches>
              <Swatch $c="#fff"><NoneMark s={17} /></Swatch>
              {PALETTE.map((c, i) => (
                <Swatch key={i} $c={c} $light={c === "#009944"} />
              ))}
            </Swatches>
            <PaletteTool $h={14}><ChevUp dir="down" c="#c4c4c4" /></PaletteTool>
            <PaletteTool $h={22}><Chevrons /></PaletteTool>
          </Palette>
        </Workspace>

        <StatusBar>
          <StatusText $ml={8} $w={84} $tight>( 69.322, -0.081 )</StatusText>
          <Tool $ml={22}><RightCaret /></Tool>
          <StatusText $ml={45} $w={88} $tight>Curve on Layer 1</StatusText>
          <Tool $ml={186}>
            <Ico w={16} h={17}>
              <rect x=".5" y=".5" width="15" height="12" />
              <rect x="2" y="2" width="12" height="5" fill="#e60012" stroke="none" />
              <rect x="2" y="7" width="12" height="4" fill="#00a0e9" stroke="none" />
              <circle cx="8" cy="7" r="1.6" stroke="#fff" />
              <path d="M6 13.5v1.5M10 13.5v1.5M3 16h10" />
            </Ico>
          </Tool>
          <Tool $ml={19}>
            <Ico w={17} h={17}>
              <path d="M8 1.5l6.5 6.5-6.5 6.5L1.5 8z" strokeWidth={1.6} />
              <path d="M4 9h8l-4 4.5z" fill="#e60012" stroke="none" />
              <path d="M16 10v7h-5z" fill="#e60012" stroke="none" />
            </Ico>
          </Tool>
          <StatusBox $c="#fff" $w={22} $ml={0}><NoneMark s={22} /></StatusBox>
          <StatusText $ml={5} $w={28}>None</StatusText>
          <Sep $ml={124} $h={22} />
          <Tool $ml={16}><PenIcon /></Tool>
          <StatusBox $c="#e60012" $w={22} $ml={1} />
          <StatusText $ml={5} $w={103} $tight>C:0 M:100 Y:100 K:0</StatusText>
          <StatusText $ml={5} $tight>Hairline</StatusText>
        </StatusBar>
      </Frame>

      <PenCallout />
      <NoteCallout>Raster Text<br />Decoration</NoteCallout>
      <Overlay width="918" height="684" viewBox="0 0 918 684">
        <path d="M566 127L511 249" stroke={RED} strokeWidth={3} fill="none" />
        <path d="M504 262L505 245 518 250z" fill={RED} />
        <path d="M314 253L353 311" stroke={RED} strokeWidth={3} fill="none" />
        <path d="M362 324L347 315 360 305z" fill={RED} />
      </Overlay>
    </Page>
  );
}
